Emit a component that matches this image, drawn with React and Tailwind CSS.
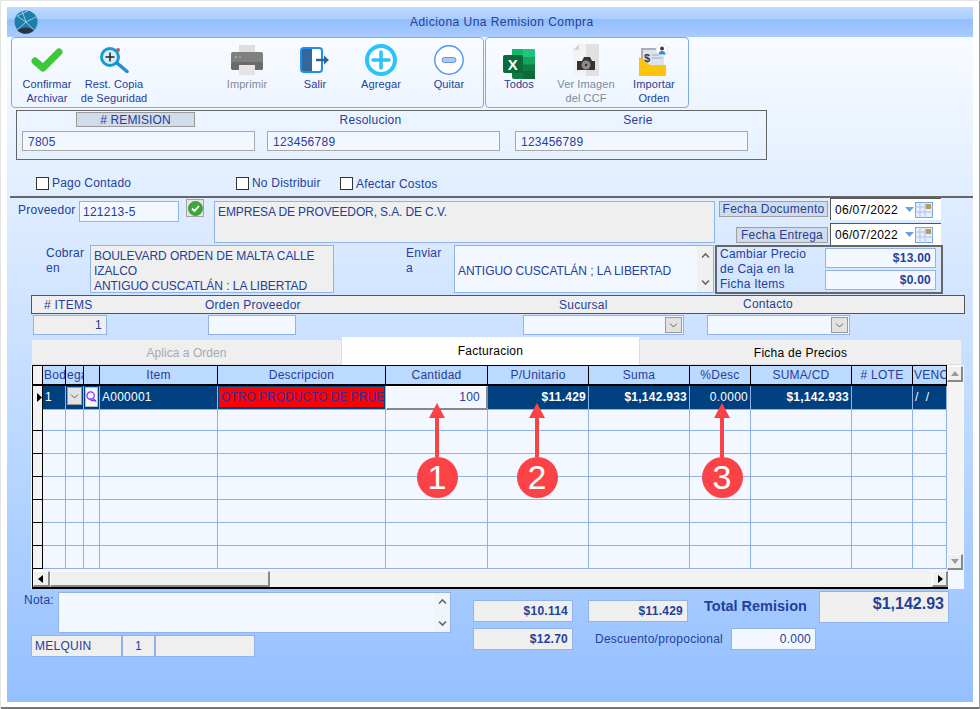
const GRID = "grid grid-cols-[10px_23px_18px_16px_118px_168px_102px_101px_101px_61px_101px_61px_34px]";

function Globe() {
  return (
    <svg width="24" height="24" viewBox="0 0 24 24">
      <circle cx="12" cy="12" r="11.5" fill="#1b7fa8" />
      <path d="M3 20 A11.5 11.5 0 0 0 20 20 Q12 15 3 20Z" fill="#2b3444" />
      <path d="M3 6 L12 12 L20 20 M12 12 L8 1 M12 12 L22 7 M12 12 L3 20 M3 6 L14 1" stroke="#b7dcea" strokeWidth="0.8" fill="none" />
    </svg>
  );
}
function Check() {
  return (
    <svg width="32" height="24" viewBox="0 0 32 24">
      <path d="M4 13 L12 20 L28 4" stroke="#3cc83a" strokeWidth="7" strokeLinecap="round" strokeLinejoin="round" fill="none" />
    </svg>
  );
}
function Magnifier() {
  return (
    <svg width="30" height="26" viewBox="0 0 30 26">
      <circle cx="19" cy="3" r="2" fill="#c55" />
      <circle cx="11" cy="10" r="8.5" fill="#d8eef6" stroke="#159bd0" strokeWidth="3" />
      <path d="M11 5.5 V14.5 M6.5 10 H15.5" stroke="#222" strokeWidth="1.5" />
      <path d="M18 16 L28 24.5" stroke="#1f8fd6" strokeWidth="3.5" strokeLinecap="round" />
    </svg>
  );
}
function Printer() {
  return (
    <svg width="32" height="30" viewBox="0 0 32 30">
      <rect x="8" y="0" width="16" height="8" fill="#dedede" />
      <path d="M2 7 H30 a2 2 0 0 1 2 2 V23 a2 2 0 0 1 -2 2 H2 a2 2 0 0 1 -2 -2 V9 a2 2 0 0 1 2 -2Z" fill="#808080" />
      <rect x="0" y="17" width="32" height="8" rx="2" fill="#6b6b6b" />
      <rect x="8" y="20" width="16" height="10" fill="#e4e4e4" />
      <circle cx="5" cy="12" r="1.2" fill="#aaa" />
      <circle cx="9" cy="12" r="1.2" fill="#999" />
    </svg>
  );
}
function Salir() {
  return (
    <svg width="30" height="26" viewBox="0 0 30 26">
      <rect x="1" y="1" width="21" height="24" rx="3" fill="#fff" stroke="#1c8ff0" strokeWidth="2" />
      <path d="M2 3 a1 1 0 0 1 1 -1 H12 V24 H3 a1 1 0 0 1 -1 -1Z" fill="#33689f" />
      <path d="M16 13 H26" stroke="#2f6296" strokeWidth="2.5" />
      <path d="M24 8.5 L29 13 L24 17.5Z" fill="#2f6296" />
    </svg>
  );
}
function Agregar() {
  return (
    <svg width="32" height="32" viewBox="0 0 32 32">
      <circle cx="16" cy="16" r="14" fill="#fff" stroke="#2bc3fb" strokeWidth="4" />
      <path d="M16 8 V24 M8 16 H24" stroke="#2bc3fb" strokeWidth="3.5" strokeLinecap="round" />
    </svg>
  );
}
function Quitar() {
  return (
    <svg width="30" height="30" viewBox="0 0 30 30">
      <circle cx="15" cy="15" r="14.2" fill="#fff" stroke="#4e93f5" strokeWidth="1.4" />
      <rect x="8" y="12.5" width="14" height="5" rx="2.5" fill="#a9c9f6" stroke="#5d95ea" strokeWidth="1" />
    </svg>
  );
}
function Excel() {
  return (
    <svg width="32" height="30" viewBox="0 0 32 30">
      <path d="M9 0 H30 a2 2 0 0 1 2 2 V28 a2 2 0 0 1 -2 2 H11 a2 2 0 0 1 -2 -2Z" fill="#107c41" />
      <path d="M20 0 H30 a2 2 0 0 1 2 2 V8 H20Z" fill="#21c57a" />
      <rect x="20" y="8" width="12" height="7.5" fill="#16a35c" />
      <rect x="9" y="0" width="11" height="8" fill="#0fb96a" />
      <rect x="20" y="22" width="12" height="8" fill="#0c6b38" />
      <rect x="0" y="6" width="20" height="18" rx="2" fill="#0b6a3a" />
      <text x="10" y="20.5" fontFamily="'Liberation Sans', sans-serif" fontWeight="700" fontSize="15" fill="#fff" textAnchor="middle">X</text>
    </svg>
  );
}
function CamDoc() {
  return (
    <svg width="26" height="32" viewBox="0 0 26 32">
      <path d="M6 0 H13 V32 H0 V6Z" fill="#f3f3f3" />
      <path d="M0 6 L6 0 V6Z" fill="#d5d5d5" />
      <rect x="13" y="0" width="13" height="32" fill="#e1e1e1" />
      <path d="M4 17 H9 L11 13 H17 L19 17 H22 V26 H4Z" fill="#333" />
      <circle cx="13" cy="21" r="4.5" fill="#8a8a8a" />
      <circle cx="13" cy="21" r="1.2" fill="#333" />
    </svg>
  );
}
function Importar() {
  return (
    <svg width="30" height="32" viewBox="0 0 30 32">
      <rect x="2" y="4" width="23" height="22" fill="#a7afba" />
      <rect x="4" y="6" width="21" height="20" fill="#dde3ee" />
      <text x="5" y="18" fontFamily="'Liberation Sans', sans-serif" fontWeight="700" fontSize="11" fill="#2b3a55">$</text>
      <path d="M13 11 H24 M13 14 H24" stroke="#b5bfd2" strokeWidth="1.5" />
      <path d="M0 13 L11 21 H27 V32 H0Z" fill="#ffc20e" />
      <circle cx="23" cy="6" r="6" fill="#fff" stroke="#ddd" strokeWidth="0.7" />
      <circle cx="23" cy="4.5" r="2" fill="#4a3a30" />
      <path d="M19.5 10.5 a3.5 3.5 0 0 1 7 0Z" fill="#2d8fd6" />
    </svg>
  );
}
function SmallCheck() {
  return (
    <div className="w-[18px] h-[18px] bg-[#e4e4e4] border border-[#a5a5a5] flex items-center justify-center">
      <svg width="15" height="15" viewBox="0 0 15 15">
        <circle cx="7.5" cy="7.5" r="7" fill="#3fa83a" stroke="#2f7d2c" strokeWidth="0.7" />
        <path d="M4 7.5 L6.5 10 L11 5" stroke="#fff" strokeWidth="1.8" fill="none" />
      </svg>
    </div>
  );
}
function Chevron({ up, color = "#666", sw = 1.6 }) {
  return (
    <svg width="9" height="7" viewBox="0 0 9 7">
      <path d={up ? "M1 5.5 L4.5 2 L8 5.5" : "M1 1.5 L4.5 5 L8 1.5"} stroke={color} strokeWidth={sw} fill="none" />
    </svg>
  );
}
function SelectBtn() {
  return (
    <div className="w-[17px] h-[16px] bg-[#e2e2e2] border border-[#999] flex items-center justify-center">
      <Chevron sw={1} />
    </div>
  );
}
function Tri({ dir }) {
  const d = { up: "M0 6 L4 1 L8 6Z", down: "M0 1 L4 6 L8 1Z", left: "M6 0 L1 4 L6 8Z", right: "M2 0 L7 4 L2 8Z" }[dir];
  const dark = dir === "left" || dir === "right";
  return (
    <svg width="8" height="8" viewBox="0 0 8 8">
      <path d={d} fill={dark ? "#000" : "#999"} />
    </svg>
  );
}
function ScrollBtn({ dir, cls }) {
  return (
    <div className={"bg-[#efefef] border-t border-l border-t-white border-l-white border-r-2 border-b-2 border-r-[#888] border-b-[#888] flex items-center justify-center " + cls}>
      <Tri dir={dir} />
    </div>
  );
}
function Tool({ icon, label, label2, ml, gray }) {
  return (
    <div className={"w-16 flex flex-col items-center shrink-0 " + ml}>
      <div className="h-[34px] flex items-center justify-center">{icon}</div>
      <div className={"text-[11px] leading-[14px] tracking-[0.1px] text-center whitespace-nowrap " + (gray ? "text-[#808a98]" : "text-[#23409a]")}>
        <div>{label}</div>
        {label2 && <div>{label2}</div>}
      </div>
    </div>
  );
}
function Box({ cls, children }) {
  return <div className={"border border-[#8fb3ea] shrink-0 overflow-hidden " + cls}>{children}</div>;
}
function RemField({ label, value, ml, boxed, lab }) {
  return (
    <div className={"w-[233px] shrink-0 " + ml}>
      {boxed ? (
        <div className="ml-[54px] mt-[1px] w-[119px] h-[15px] bg-[#d0dcea] border border-[#9a9a9a] text-center text-[12px] leading-[14px] tracking-[0.1px]">{label}</div>
      ) : (
        <div className={"mt-[1px] h-[15px] text-center text-[12px] leading-[17px] " + lab}>{label}</div>
      )}
      <div className="mt-[4px] h-[20px] bg-[#f3f7ff] border border-[#a8a8a8] pl-[5px] text-[12px] leading-[20px]">{value}</div>
    </div>
  );
}
function Checkbox({ label, cls }) {
  return (
    <div className={"flex items-center " + cls}>
      <div className="w-[13px] h-[13px] bg-white border border-[#333] shrink-0" />
      <span className="ml-[3px] text-[12px] leading-[14px] tracking-[0.2px] whitespace-nowrap">{label}</span>
    </div>
  );
}
function DateBox() {
  return (
    <div className="w-[111px] h-[22px] bg-white border-t border-l border-t-[#555] border-l-[#555] flex items-center shrink-0">
      <span className="ml-[4px] text-[12px] text-black tracking-[0.3px]">06/07/2022</span>
      <svg className="ml-[7px]" width="9" height="5" viewBox="0 0 9 5"><path d="M0 0 H9 L4.5 5Z" fill="#6a9fe0" /></svg>
      <svg className="ml-[1px]" width="18" height="16" viewBox="0 0 18 16">
        <rect x="0.5" y="0.5" width="17" height="15" fill="#e8eefb" stroke="#7aa3e5" />
        <path d="M0 5 H18 M0 10 H18 M5 0 V16 M10 0 V16" stroke="#a9c2ec" />
        <rect x="11" y="2" width="5" height="5" fill="#b89a5a" />
      </svg>
    </div>
  );
}
const EMPTY = Array.from({ length: 13 });
function EmptyRow({ h = "h-[23px]" }) {
  return (
    <div className={GRID + " " + h}>
      {EMPTY.map((_, i) => (
        <div key={i} className={i === 0 ? "bg-[#f3f3f3] border-r border-b border-black" : "border-r border-b border-[#8fb2ea]"} />
      ))}
    </div>
  );
}
function Head({ children, left }) {
  return (
    <div className={"bg-[#bcd9ff] border-r border-black border-b-2 border-b-black text-[12px] leading-[18px] overflow-hidden whitespace-nowrap " + (left ? "pl-[1px]" : "text-center")}>
      {children}
    </div>
  );
}
function Cell({ children, bold, cls }) {
  return (
    <div className={"bg-[#00407f] border-r border-b border-[#8fb2ea] text-white text-[12px] leading-[22px] overflow-hidden whitespace-nowrap " + (bold ? "font-bold text-right pr-[2px] " : "") + (cls || "")}>
      {children}
    </div>
  );
}
function Marker({ n, cls }) {
  return (
    <div className={"absolute top-[402px] w-[40px] h-[95px] flex flex-col items-center " + cls}>
      <div className="w-0 h-0 border-l-[8px] border-r-[8px] border-b-[15px] border-l-transparent border-r-transparent border-b-[#fb4347]" />
      <div className="w-[4px] h-[40px] bg-[#fb4347]" />
      <div className="w-[41px] h-[41px] rounded-full bg-[#fb4347] text-white text-[34px] leading-[41px] text-center shrink-0 tracking-normal">{n}</div>
    </div>
  );
}

export default function App() {
  return (
    <div className="relative w-[980px] h-[709px] bg-white overflow-hidden border-t border-l border-[#e4e4e4] font-['Liberation_Sans',Arial,sans-serif] text-[#23409a] tracking-[0.25px]">
      <div className="absolute left-0 right-0 bottom-0 h-[2px] bg-[#777]" />
      <div className="absolute right-0 top-0 bottom-0 w-px bg-[#999]" />
      <div className="ml-[6px] mt-[6px] w-[966px] h-[695px] bg-gradient-to-b from-[#fdfeff] to-[#94c0ff]">
        {/* title */}
        <div className="relative h-[30px] bg-[linear-gradient(to_bottom,#bfdcff_0%,#a9cdff_40%,#93bdfb_42%,#a8ccff_100%)] flex items-center pl-[403px] text-[12px] tracking-[0.46px]">
          <div className="absolute left-[7px] top-[3px]"><Globe /></div>
          Adiciona Una Remision Compra
        </div>

        {/* toolbar */}
        <div className="ml-[4px] flex">
          <div className="w-[473px] h-[71px] border border-[#7fa9e8] rounded-[4px] flex pt-[5px]">
            <Tool icon={<Check />} label="Confirmar" label2="Archivar" ml="ml-[3px]" />
            <Tool icon={<Magnifier />} label="Rest. Copia" label2="de Seguridad" ml="ml-[3px]" />
            <Tool icon={<Printer />} label="Imprimir" ml="ml-[69px]" gray />
            <Tool icon={<Salir />} label="Salir" ml="ml-[4px]" />
            <Tool icon={<Agregar />} label="Agregar" ml="ml-[2px]" />
            <Tool icon={<Quitar />} label="Quitar" ml="ml-[4px]" />
          </div>
          <div className="ml-px w-[204px] h-[71px] border border-[#7fa9e8] rounded-[4px] flex pt-[5px]">
            <Tool icon={<div className="mt-[8px]"><Excel /></div>} label="Todos" ml="ml-[1px]" />
            <Tool icon={<CamDoc />} label="Ver Imagen" label2="del CCF" ml="ml-[3px]" gray />
            <Tool icon={<Importar />} label="Importar" label2="Orden" ml="ml-[4px]" />
          </div>
        </div>

        {/* remision */}
        <div className="ml-[9px] mt-[2px] w-[751px] h-[50px] border border-[#666] flex">
          <RemField label="# REMISION" value="7805" ml="ml-[5px]" boxed />
          <RemField label="Resolucion" value="123456789" ml="ml-[12px]" lab="pr-[26px]" />
          <RemField label="Serie" value="123456789" ml="ml-[15px]" lab="pl-[13px]" />
        </div>

        {/* checks */}
        <div className="ml-[29px] mt-[16px] h-[14px] flex">
          <Checkbox label="Pago Contado" cls="w-[200px]" />
          <Checkbox label="No Distribuir" cls="w-[104px]" />
          <Checkbox label="Afectar Costos" cls="mt-[1px]" />
        </div>
        <div className="ml-[3px] mt-[6px] h-[2px] bg-[#666]" />

        {/* proveedor row */}
        <div className="h-[47px] flex items-start">
          <div className="ml-[11px] w-[61px] mt-[5px] text-[12px] leading-[14px] shrink-0">Proveedor</div>
          <Box cls="mt-[3px] w-[100px] h-[21px] bg-[#f3f7ff] pl-[3px] text-[12px] leading-[20px]">121213-5</Box>
          <div className="ml-[7px] mt-[1px] shrink-0"><SmallCheck /></div>
          <Box cls="ml-[10px] mt-[3px] w-[501px] h-[42px] bg-[#efefef] pl-[3px] pt-[3px] text-[12px] leading-[14px] tracking-[-0.12px] whitespace-nowrap">EMPRESA DE PROVEEDOR, S.A. DE C.V.</Box>
          <div className="ml-[4px] w-[222px] shrink-0">
            <div className="flex">
              <div className="mt-[3px] w-[109px] h-[16px] bg-[#d0dcea] border border-[#a0a0a0] text-center text-[12px] leading-[14px] whitespace-nowrap shrink-0">Fecha Documento</div>
              <div className="ml-[2px]"><DateBox /></div>
            </div>
            <div className="mt-[3px] flex justify-end">
              <div className="mt-[4px] w-[92px] h-[16px] bg-[#d0dcea] border border-[#a0a0a0] text-center text-[12px] leading-[14px] whitespace-nowrap shrink-0">Fecha Entrega</div>
              <div className="ml-[2px]"><DateBox /></div>
            </div>
          </div>
        </div>

        {/* cobrar row */}
        <div className="h-[48px] flex items-start">
          <div className="ml-[39px] mt-px w-[44px] text-[12px] leading-[15px] shrink-0">Cobrar<br />en</div>
          <Box cls="w-[244px] h-[48px] bg-[#efefef] pl-[3px] pt-[3px] text-[12px] leading-[15px] tracking-[-0.05px] whitespace-nowrap">
            BOULEVARD ORDEN DE MALTA CALLE<br />IZALCO<br />ANTIGUO CUSCATLÁN : LA LIBERTAD
          </Box>
          <div className="ml-[72px] mt-px w-[48px] text-[12px] leading-[15px] shrink-0">Enviar<br />a</div>
          <Box cls="w-[260px] h-[48px] bg-[#f3f7ff] flex">
            <div className="flex-1 pl-[3px] pt-[18px] text-[12px] leading-[15px] tracking-[-0.05px] whitespace-nowrap">ANTIGUO CUSCATLÁN ; LA LIBERTAD</div>
            <div className="w-[16px] bg-[#f0f0f0] flex flex-col items-center justify-between py-[6px]">
              <Chevron up /><Chevron />
            </div>
          </Box>
          <div className="ml-[1px] w-[228px] h-[49px] border-2 border-[#666] flex shrink-0">
            <div className="w-[108px] pl-[3px] text-[12px] leading-[15px] whitespace-nowrap">Cambiar Precio<br />de Caja en la<br />Ficha Items</div>
            <div className="mt-px">
              <Box cls="w-[111px] h-[20px] bg-[#f3f7ff] text-right pr-[4px] font-bold text-[12px] leading-[18px]">$13.00</Box>
              <Box cls="mt-[2px] w-[111px] h-[20px] bg-[#f3f7ff] text-right pr-[4px] font-bold text-[12px] leading-[18px]">$0.00</Box>
            </div>
          </div>
        </div>

        {/* header strip */}
        <div className="ml-[24px] mt-[2px] w-[934px] h-[19px] bg-[#efefef] border border-[#555] flex text-[12px] leading-[19px] whitespace-nowrap">
          <div className="ml-[12px] w-[161px] shrink-0"># ITEMS</div>
          <div className="w-[354px] shrink-0">Orden Proveedor</div>
          <div className="w-[184px] shrink-0">Sucursal</div>
          <div className="-mt-px">Contacto</div>
        </div>

        {/* inputs */}
        <div className="ml-[26px] mt-px h-[20px] flex">
          <Box cls="w-[74px] h-[20px] bg-[#efefef] text-right pr-[4px] text-[12px] leading-[19px]">1</Box>
          <Box cls="ml-[101px] w-[88px] h-[20px] bg-[#f3f7ff]" />
          <Box cls="ml-[227px] w-[161px] h-[20px] bg-[#f3f7ff] flex justify-end items-center pr-[1px]"><SelectBtn /></Box>
          <Box cls="ml-[23px] w-[143px] h-[20px] bg-[#f3f7ff] flex justify-end items-center pr-[1px]"><SelectBtn /></Box>
        </div>

        {/* tabs */}
        <div className="ml-[24px] mt-[2px] h-[28px] flex items-end text-[12px] whitespace-nowrap">
          <div className="w-[311px] h-[26px] bg-[#efefef] border border-[#dedede] text-center leading-[26px] text-[#a9a9a9] tracking-[0.05px]">Aplica a Orden</div>
          <div className="w-[297px] h-[28px] bg-white text-center leading-[29px] text-black">Facturacion</div>
          <div className="w-[323px] h-[26px] bg-[#efefef] border border-[#dedede] text-center leading-[26px] text-black">Ficha de Precios</div>
        </div>

        {/* grid */}
        <div className="ml-[24px] w-[933px] h-[224px] bg-[#f3f7ff] flex flex-col">
          <div className="flex h-[206px]">
            <div className="ml-[1px] w-[915px] border-l border-black border-t border-t-black">
              <div className={GRID + " h-[20px]"}>
                <div className="bg-[#f3f3f3] border-r border-b-2 border-black" />
                <Head left>Bod</Head>
                <Head left>ega</Head>
                <Head />
                <Head>Item</Head>
                <Head>Descripcion</Head>
                <Head>Cantidad</Head>
                <Head>P/Unitario</Head>
                <Head>Suma</Head>
                <Head>%Desc</Head>
                <Head>SUMA/CD</Head>
                <Head># LOTE</Head>
                <Head left>VENC</Head>
              </div>
              <div className={GRID + " h-[22px]"}>
                <div className="bg-[#f3f3f3] border-r border-b border-black flex items-center justify-end">
                  <svg width="6" height="9" viewBox="0 0 6 9"><path d="M1 0 L6 4.5 L1 9Z" fill="#000" /></svg>
                </div>
                <Cell cls="pl-[2px]">1</Cell>
                <Cell cls="p-px"><div className="h-[18px] bg-[#e2e2e2] border border-[#999] flex items-center justify-center"><Chevron sw={1} /></div></Cell>
                <Cell cls="p-px"><div className="h-[20px] bg-[#f3f7ff] border border-[#bbb] flex items-start justify-center pt-[2px]">
                  <svg width="12" height="13" viewBox="0 0 12 13"><circle cx="5" cy="5.5" r="4" fill="none" stroke="#8a35e8" strokeWidth="1.4" /><path d="M8 9 L11 12 M5 11 H11" stroke="#8a35e8" strokeWidth="1.4" /></svg>
                </div></Cell>
                <Cell cls="pl-[2px]">A000001</Cell>
                <Cell cls="p-px"><div className="h-[20px] bg-[#ff0000] text-[#3b2aa0] pl-[2px] leading-[20px] tracking-[0px] overflow-hidden">OTRO PRODUCTO DE PRUEBA</div></Cell>
                <div className="bg-[#f3f7ff] border-t border-l border-white border-r-2 border-b-2 border-r-[#888] border-b-[#888] text-[#23409a] text-[12px] leading-[21px] text-right pr-[6px]">100</div>
                <Cell bold>$11.429</Cell>
                <Cell bold>$1,142.933</Cell>
                <Cell cls="text-right pr-[2px]">0.0000</Cell>
                <Cell bold>$1,142.933</Cell>
                <Cell />
                <Cell cls="pl-[2px]">/ &nbsp;/</Cell>
              </div>
              <EmptyRow /><EmptyRow /><EmptyRow /><EmptyRow /><EmptyRow /><EmptyRow /><EmptyRow />
            </div>
            <div className="w-[16px] flex flex-col justify-between bg-[#f4f4f4] mt-px mb-[1px]">
              <ScrollBtn dir="up" cls="h-[16px]" />
              <ScrollBtn dir="down" cls="h-[16px]" />
            </div>
          </div>
          <div className="ml-[1px] w-[931px] h-[18px] border-l border-black flex">
            <div className="w-[915px] h-[18px] border-b-2 border-black flex bg-[#f2f2f2]">
              <ScrollBtn dir="left" cls="w-[17px] h-[16px]" />
              <div className="w-[220px] h-[16px] bg-[#efefef] border-t border-l border-t-white border-l-white border-r-2 border-b-2 border-r-[#888] border-b-[#888]" />
              <ScrollBtn dir="right" cls="ml-auto w-[16px] h-[16px]" />
            </div>
          </div>
        </div>

        {/* bottom */}
        <div className="flex items-start">
          <div className="ml-[17px] w-[449px] shrink-0">
            <div className="flex">
              <div className="w-[34px] mt-[4px] text-[12px] leading-[14px]">Nota:</div>
              <Box cls="mt-[3px] w-[393px] h-[41px] bg-[#f3f7ff] flex justify-end">
                <div className="w-[16px] bg-[#f0f4fb] flex flex-col items-center justify-between py-[5px]">
                  <Chevron up /><Chevron />
                </div>
              </Box>
            </div>
            <div className="ml-[7px] mt-[2px] flex text-[12px] leading-[20px]">
              <Box cls="w-[91px] h-[22px] bg-[#efefef] pl-[3px]">MELQUIN</Box>
              <Box cls="w-[33px] h-[22px] bg-[#efefef] text-center">1</Box>
              <Box cls="w-[100px] h-[22px] bg-[#efefef]" />
            </div>
          </div>
          <div>
            <div className="flex items-start h-[34px]">
              <Box cls="mt-[11px] w-[100px] h-[22px] bg-[#efefef] text-right pr-[4px] font-bold text-[12px] leading-[20px]">$10.114</Box>
              <Box cls="ml-[15px] mt-[11px] w-[100px] h-[22px] bg-[#efefef] text-right pr-[4px] font-bold text-[12px] leading-[20px]">$11.429</Box>
              <div className="ml-[16px] mt-[8px] w-[115px] shrink-0 font-bold text-[14.5px] leading-[18px] whitespace-nowrap tracking-[0px]">Total Remision</div>
              <Box cls="mt-[2px] w-[130px] h-[32px] bg-[#efefef] text-right pr-[4px] font-bold text-[16px] leading-[24px] tracking-[0px]">$1,142.93</Box>
            </div>
            <div className="mt-[5px] flex items-start">
              <Box cls="w-[100px] h-[22px] bg-[#efefef] text-right pr-[4px] font-bold text-[12px] leading-[20px]">$12.70</Box>
              <div className="ml-[22px] w-[136px] shrink-0 text-[12px] leading-[22px] whitespace-nowrap">Descuento/propocional</div>
              <Box cls="w-[85px] h-[22px] bg-[#f3f7ff] text-right pr-[4px] text-[12px] leading-[20px]">0.000</Box>
            </div>
          </div>
        </div>
      </div>

      <Marker n="1" cls="left-[416px]" />
      <Marker n="2" cls="left-[516px]" />
      <Marker n="3" cls="left-[701px]" />
    </div>
  );
}
